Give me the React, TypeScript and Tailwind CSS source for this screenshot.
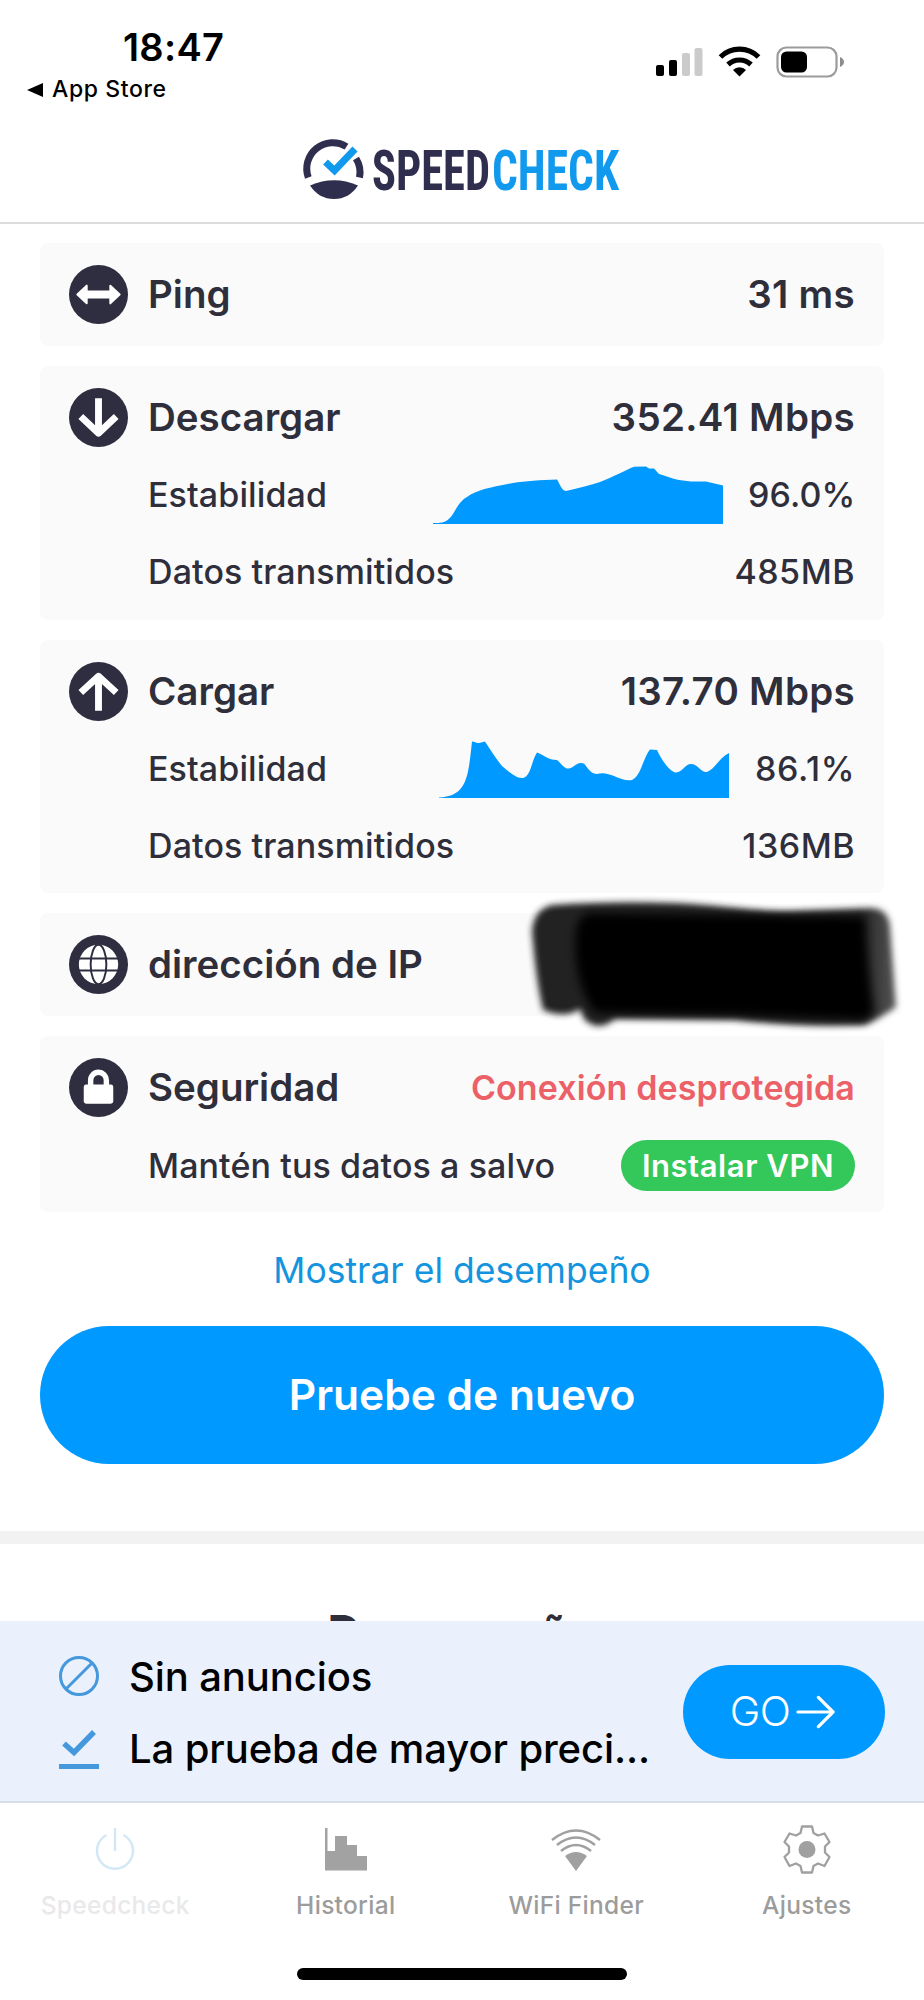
import type { ReactNode } from "react"


const downloadPath = "M0 57 C6 57 9 57 12 55.5 C22 51 22 38 34 31 C44 24 58 21 80 17 C92 15 108 14 124 13.5 C127 18 128 24 133 25 C146 22 158 19 167 16 C180 11 193 4 201 0.8 L213 0.5 L216 2.5 L221 2.5 L226 8 C234 10 240 13 246 14 L258 15.5 L273 15.5 L290 19.5 L290 58 L0 58 Z"

const uploadPath = "M0 57.5 C28 56 29 38 33 1.5 C36 1.5 37 3.5 40 3 L46 1.5 C51 9 57 19 63 26 C69 31 77 39 84 38 C92 36 92 22 98 12.5 C105 15 109 20 118 20 C123 24 125 29 130 28.5 C136 27 138 21 145 23.5 C150 30 153 34 158 34 C164 32 170 34 175 36 C182 39 187 41 193 40 C202 36 204 18 211 9.5 L218 10 C223 21 231 32 237 32.5 C244 32 246 24 252 24 C259 24 262 33 268 32 C276 29 280 18 290 13 L290 58 L0 58 Z"

const Badge = ({ children }: { children: ReactNode }) => (
    <svg className="h-[59px] w-[59px] shrink-0" viewBox="0 0 60 60" fill="none">
        <circle cx="30" cy="30" r="30" fill="#2f2e41" />
        {children}
    </svg>
)

const Card = ({ children }: { children: ReactNode }) => (
    <section className="rounded-lg bg-[#fafafa] pt-[22px] pr-[29px] pl-[29px]">{children}</section>
)

const CardTitle = ({ icon, label, children }: { icon: ReactNode, label: string, children?: ReactNode }) => (
    <div className="flex h-[59px] items-center">
        <Badge>{icon}</Badge>
        <h2 className="ml-[20px] flex-1 text-[38.5px] font-semibold">{label}</h2>
        {children}
    </div>
)

const Speed = ({ children }: { children: ReactNode }) => (
    <span className="text-[38.5px] font-semibold tracking-[0.3px]">{children}</span>
)

const Row = ({ label, children }: { label: string, children: ReactNode }) => (
    <div className="flex h-[77px] items-center pl-[79px] text-[34px] font-medium tracking-[0.1px]">
        <span className="flex-1">{label}</span>
        {children}
    </div>
)

const Chart = ({ path }: { path: string }) => (
    <svg className="mr-[25px] h-[58px] w-[290px]" viewBox="0 0 290 58">
        <path d={path} fill="#0099ff" />
    </svg>
)

const StatusBar = () => (
    <div className="flex h-[124px] justify-between">
        <div className="pt-[28px] pl-[27px]">
            <div className="ml-[96px] text-[38px] leading-[38px] font-semibold tracking-[0.3px] text-black">18:47</div>
            <div className="mt-[12px] flex items-center gap-[9px] text-[23px] leading-[23px] font-medium tracking-[0.6px] text-black">
                <svg width="16" height="14" viewBox="0 0 16 14"><path d="M0 7 L16 0 V14 Z" /></svg>
                App Store
            </div>
        </div>
        <svg className="mt-[45px] mr-[78px] h-[34px] w-[190px]" viewBox="0 0 190 34">
            <rect x="0" y="20" width="8" height="11" rx="2" />
            <rect x="13" y="15" width="8" height="16" rx="2" />
            <rect x="26" y="8" width="8" height="23" rx="2" fill="#cbcbcb" />
            <rect x="38.500" y="3" width="8" height="28" rx="2" fill="#cbcbcb" />
            <g fill="none" stroke="#000" strokeWidth="5.200">
                <path d="M64.500 12 A27 27 0 0 1 102.500 12" />
                <path d="M72 19.500 A17 17 0 0 1 95 19.500" />
            </g>
            <path d="M77 25 A9 9 0 0 1 90 25 L83.500 31.500 Z" />
            <rect x="121.500" y="2.500" width="59" height="29" rx="9" fill="none" stroke="#9b9b9b" strokeWidth="2.200" />
            <rect x="125" y="6.500" width="26" height="21" rx="5.500" />
            <path d="M184 12 Q188 14 188 17 Q188 20 184 22 Z" fill="#8c8c8c" />
        </svg>
    </div>
)

const Logo = () => (
    <div className="flex h-[100px] justify-center border-b-2 border-[#dcdcdc] pt-[15px]">
        <svg className="h-[62px] w-[318px] overflow-visible" viewBox="0 0 318 62">
            <g fill="none" stroke="#2f2e4f" strokeWidth="7">
                <path d="M5.300 38.500 A26 26 0 0 1 43.500 7.600" />
                <path d="M53 19.500 A26 26 0 0 1 56.500 38.500" />
            </g>
            <path d="M7 46.500 Q31 36 55 46.500 Q46 60 31 60 Q16 60 7 46.500 Z" fill="#2f2e4f" />
            <path d="M22.500 23 L31.500 31.500 L52 10" fill="none" stroke="#1199ee" strokeWidth="7" />
            <g fontFamily="'Roboto Condensed', 'Liberation Sans Narrow', Roboto, sans-serif" fontSize="55" fontWeight="700">
                <text x="69" y="51" textLength="118" lengthAdjust="spacingAndGlyphs" fill="#2f2e4f">SPEED</text>
                <text x="189" y="51" textLength="127" lengthAdjust="spacingAndGlyphs" fill="#1199ee">CHECK</text>
            </g>
        </svg>
    </div>
)

// marker strokes that hide the address
const Redaction = () => (
    <svg className="absolute top-[-22px] left-[480px] h-[150px] w-[400px]" viewBox="0 0 400 150">
        <defs>
            <filter id="soft" x="-10%" y="-10%" width="120%" height="120%">
                <feGaussianBlur stdDeviation="3" />
            </filter>
            <filter id="softer" x="-10%" y="-10%" width="120%" height="120%">
                <feGaussianBlur stdDeviation="5" />
            </filter>
            <linearGradient id="edge">
                <stop offset="0.9" stopColor="#222" />
                <stop offset="1" stopColor="#555" />
            </linearGradient>
        </defs>
        <path filter="url(#soft)" fill="url(#edge)" d="M32 14 Q90 10 155 12 C200 14 230 20 270 20 L350 17 Q368 17 370 35 L376 116 Q362 126 345 134 C300 136 260 134 215 129 L95 128 Q78 142 64 128 L60 118 Q45 128 23 119 Q16 90 12 40 Q14 18 32 14 Z" />
        <path filter="url(#softer)" fill="#000" d="M70 22 L345 26 Q346 70 354 122 Q345 132 330 128 L215 124 L75 122 Q52 90 56 40 Q58 24 70 22 Z" />
    </svg>
)

const tabs = [
    {
        label: "Speedcheck", color: "text-[#e9e9ea]",
        icon: <g fill="none" stroke="#d3e8f5" strokeWidth="2.500"><path d="M16.500 10 A18 18 0 1 0 33.500 10" /><path d="M25 3 V26" /></g>,
    },
    {
        label: "Historial", color: "text-[#9c9c9c]",
        icon: <path fill="#a2a2a2" d="M4 3 H6.500 V26 H14 V11 H26 V20 H36 V31 H46 V45.500 H4 Z" />,
    },
    {
        label: "WiFi Finder", color: "text-[#9c9c9c]",
        icon: (
            <g fill="none" stroke="#a0a0a0" strokeWidth="2.500">
                <path d="M1 15 Q25 -4 49 15" /><path d="M6 20 Q25 5 44 20" /><path d="M10 26 Q25 14 40 26" />
                <path stroke="none" fill="#a0a0a0" d="M14 31 Q25 23 36 31 L25 46 Z" />
            </g>
        ),
    },
    {
        label: "Ajustes", color: "text-[#9c9c9c]",
        icon: (
            <g>
                <path fill="none" stroke="#a0a0a0" strokeWidth="2.300" strokeLinejoin="round" d="M20 1.500 H30 L31.500 8 L36 10.500 L42.500 8.500 L47.500 17 L43 21.500 V27.500 L47.500 32 L42.500 41 L36 38.500 L31.500 41 L30 47.500 H20 L18.500 41 L14 38.500 L7.500 41 L2.500 32 L7 27.500 V21.500 L2.500 17 L7.500 8.500 L14 10.500 L18.500 8 Z" />
                <circle cx="25" cy="24.500" r="8.500" fill="#a0a0a0" />
            </g>
        ),
    },
]


const App = () => {
    return (
        <div className="flex h-[2000px] w-[924px] flex-col overflow-hidden bg-white font-['Inter','Liberation_Sans',sans-serif] text-[#2f2e3b]">
            <StatusBar />
            <Logo />

            <main className="flex h-[1397px] flex-col overflow-hidden">
                <div className="flex flex-col gap-[20px] px-[40px] pt-[19px] leading-none">
                    <Card>
                        <div className="h-[81px]">
                            <CardTitle label="Ping" icon={<g fill="#fff" stroke="#fff" strokeLinejoin="round" strokeWidth="2"><path d="M8.500 30 L18 21 V27 H42 V21 L51.500 30 L42 39 V33 H18 V39 Z" /></g>}>
                                <Speed>31 ms</Speed>
                            </CardTitle>
                        </div>
                    </Card>

                    <Card>
                        <div className="flex h-[232px] flex-col">
                            <CardTitle label="Descargar" icon={<path d="M30 10.500 V46 M12 29 L30 46 L48 29" stroke="#fff" strokeWidth="7" strokeLinejoin="round" />}>
                                <Speed>352.41 Mbps</Speed>
                            </CardTitle>
                            <div className="mt-[9px]">
                                <Row label="Estabilidad">
                                    <Chart path={downloadPath} />
                                    <span className="w-[107px] text-right">96.0%</span>
                                </Row>
                                <Row label="Datos transmitidos"><span className="tracking-[0.5px]">485MB</span></Row>
                            </div>
                        </div>
                    </Card>

                    <Card>
                        <div className="flex h-[231px] flex-col">
                            <CardTitle label="Cargar" icon={<path d="M30 49.500 V15 M12 31 L30 14.500 L48 31" stroke="#fff" strokeWidth="7" strokeLinejoin="round" />}>
                                <Speed>137.70 Mbps</Speed>
                            </CardTitle>
                            <div className="mt-[9px]">
                                <Row label="Estabilidad">
                                    <Chart path={uploadPath} />
                                    <span className="w-[101px] text-right tracking-[0.6px]">86.1%</span>
                                </Row>
                                <Row label="Datos transmitidos"><span className="tracking-[0.5px]">136MB</span></Row>
                            </div>
                        </div>
                    </Card>

                    <div className="relative">
                        <Card>
                            <div className="h-[81px]">
                                <CardTitle label="dirección de IP" icon={<>
                                    <circle cx="30" cy="30" r="20" fill="#fff" />
                                    <g stroke="#2f2e41" strokeWidth="2"><ellipse cx="30" cy="30" rx="8" ry="20" /><path d="M9 24 H51 M9 36 H51" /></g>
                                </>} />
                            </div>
                        </Card>
                        <Redaction />
                    </div>

                    <Card>
                        <div className="h-[154px]">
                            <CardTitle label="Seguridad" icon={<>
                                <rect x="15" y="27" width="30" height="19.500" rx="2.500" fill="#fff" />
                                <path d="M22 28 V22.500 A8 8 0 0 1 38 22.500 V28" stroke="#fff" strokeWidth="5.500" />
                            </>}>
                                <span className="text-[34px] font-semibold tracking-[0.12px] text-[#ec6168]">Conexión desprotegida</span>
                            </CardTitle>
                            <div className="mt-[10px]">
                                <Row label="Mantén tus datos a salvo">
                                    <button className="h-[51px] w-[234px] rounded-full bg-[#34c759] text-[31px] font-semibold tracking-[0.55px] text-white">Instalar VPN</button>
                                </Row>
                            </div>
                        </div>
                    </Card>
                </div>

                <a className="mt-[34px] text-center text-[35.5px] leading-[50px] text-[#1494de]">Mostrar el desempeño</a>
                <button className="mx-[40px] mt-[30px] h-[138px] shrink-0 rounded-full bg-[#0099ff] text-[42.5px] font-semibold text-white">Pruebe de nuevo</button>

                <div className="mt-[67px] h-[13px] shrink-0 bg-[#f2f2f2]" />
                <h2 className="mt-[63px] shrink-0 text-center text-[46px] leading-[50px] font-bold">Desempeño</h2>
            </main>

            <aside className="flex h-[182px] shrink-0 items-center border-b-2 border-[#d6dfe7] bg-[#eaf1fd] pr-[39px] pl-[58px] text-black">
                <div className="flex flex-1 flex-col gap-[30px] pt-[3px]">
                    <div className="flex h-[42px] items-center gap-[29px]">
                        <svg width="42" height="42" viewBox="0 0 42 42" fill="none" stroke="#4698dc" strokeWidth="3"><circle cx="21" cy="20" r="18.500" /><path d="M8 33 L34 7" /></svg>
                        <span className="text-[40px] leading-none font-medium tracking-[-0.1px]">Sin anuncios</span>
                    </div>
                    <div className="flex h-[42px] items-center gap-[29px]">
                        <svg width="42" height="42" viewBox="0 0 42 42" fill="none" stroke="#4698dc"><path d="M6 15.500 L16 24.500 L36 4" strokeWidth="5.500" /><path d="M1 38.500 H41" strokeWidth="5" /></svg>
                        <span className="text-[40px] leading-none font-medium tracking-[-0.1px]">La prueba de mayor preci...</span>
                    </div>
                </div>
                <button className="mt-[2px] flex h-[94px] w-[202px] items-center justify-center gap-[6px] rounded-full bg-[#0099ff] pr-[3px] text-[41px] font-light tracking-[-0.5px] text-white">
                    GO
                    <svg width="39" height="34" viewBox="0 0 40 34" fill="none" stroke="#fff" strokeWidth="3.300" strokeLinecap="round" strokeLinejoin="round"><path d="M2 17 H38 M23 2 L38 17 L23 32" /></svg>
                </button>
            </aside>

            <nav className="grid h-[165px] shrink-0 grid-cols-4 pt-[22px] pr-[2px]">
                {tabs.map(tab => (
                    <div key={tab.label} className="flex flex-col items-center">
                        <svg className="h-[50px] w-[50px]" viewBox="0 0 50 50">{tab.icon}</svg>
                        <span className={`mt-[17px] text-[24.5px] leading-[26px] font-medium tracking-[0.3px] ${tab.color}`}>{tab.label}</span>
                    </div>
                ))}
            </nav>
            <div className="h-[12px] w-[330px] shrink-0 self-center rounded-full bg-black" />
        </div>
    )
}

export default App
